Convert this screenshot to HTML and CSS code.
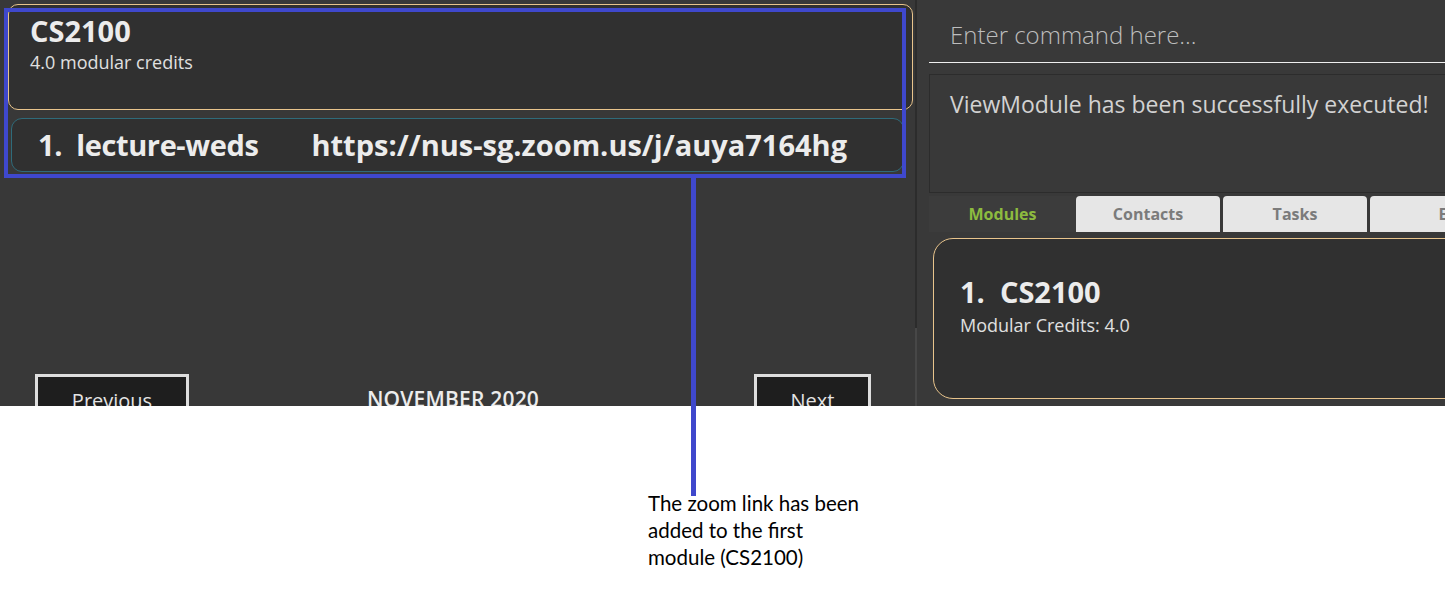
FILE: index.html
```html
<!DOCTYPE html>
<html lang="en">
<head>
<meta charset="utf-8">
<title>Module view</title>
<link rel="stylesheet" href="styles.css">
</head>
<body>
<div class="page">
  <div class="app">
    <section class="left">
      <div class="module-card">
        <div class="module-title">CS2100</div>
        <div class="module-sub">4.0 modular credits</div>
      </div>
      <div class="link-card">
        <span class="link-name">1.&nbsp;&nbsp;lecture-weds</span>
        <span class="link-url">https://nus-sg.zoom.us/j/auya7164hg</span>
      </div>
      <div class="calendar-space"></div>
      <div class="month-nav">
        <div class="nav-btn prev">Previous</div>
        <div class="month">NOVEMBER 2020</div>
        <div class="nav-btn next">Next</div>
      </div>
    </section>
    <div class="divider"></div>
    <section class="right">
      <div class="command">Enter command here...</div>
      <div class="result">ViewModule has been successfully executed!</div>
      <div class="tabs">
        <div class="tab active">Modules</div>
        <div class="tab">Contacts</div>
        <div class="tab">Tasks</div>
        <div class="tab wide">Events</div>
      </div>
      <div class="tab-body">
        <div class="list-card">
          <div class="list-title">1.&nbsp;&nbsp;CS2100</div>
          <div class="list-sub">Modular Credits: 4.0</div>
        </div>
      </div>
    </section>
  </div>
  <div class="note">
    <p>The zoom link has been<br>added to the first<br>module (CS2100)</p>
  </div>
  <div class="callout-box"></div>
  <div class="callout-line"></div>
</div>
</body>
</html>
```
FILE: styles.css
```css
* { box-sizing: border-box; }
html, body { margin: 0; padding: 0; background: #ffffff; }
body { font-family: "Open Sans", "Noto Sans", sans-serif; }

.page { position: relative; width: 1445px; height: 593px; overflow: hidden; }

.app {
  display: flex;
  height: 406px;
  overflow: hidden;
  background: #383838;
}

/* ---------- left column ---------- */
.left {
  width: 915px;
  flex: none;
  display: flex;
  flex-direction: column;
  padding-top: 4px;
  background: #383838;
}
.left > * { flex: none; }
.module-card {
  margin-left: 8px;
  width: 905px;
  height: 106px;
  border: 1px solid #e8c48c;
  border-radius: 10px;
  background: #303030;
  padding: 8px 0 0 21px;
  color: #ececec;
}
.module-title {
  font-size: 29px;
  font-weight: 700;
  line-height: 36px;
}
.module-sub {
  font-size: 18px;
  line-height: 24px;
  margin-top: 1px;
  color: #e0e0e0;
}
.link-card {
  margin: 8px 0 0 11px;
  width: 893px;
  height: 54px;
  border: 1px solid #2f6b7a;
  border-radius: 11px;
  background: #303030;
  padding: 8px 0 0 26px;
  display: flex;
  gap: 53px;
  font-size: 29px;
  font-weight: 700;
  line-height: 36px;
  color: #ececec;
  white-space: nowrap;
}
.link-name { letter-spacing: -0.4px; }
.calendar-space { height: 202px; }
.month-nav {
  display: grid;
  grid-template-columns: 1fr auto 1fr;
  align-items: start;
  padding: 0 44px 0 35px;
}
.nav-btn {
  height: 48px;
  border: 3px solid #dedede;
  background: #1e1e1e;
  color: #e4e4e4;
  font-size: 20px;
  line-height: 28px;
  padding-top: 10px;
  text-align: center;
}
.nav-btn.prev { width: 154px; justify-self: start; }
.nav-btn.next { width: 117px; justify-self: end; }
.month {
  color: #ececec;
  font-size: 21px;
  font-weight: 600;
  line-height: 28px;
  padding-top: 11px;
  letter-spacing: 0.2px;
}

.divider {
  width: 2px;
  flex: none;
  background: linear-gradient(#2c2c2c 0 328px, #474747 328px);
}

/* ---------- right column ---------- */
.right {
  flex: 1;
  min-width: 0;
  overflow: hidden;
  padding-left: 12px;
  background: #393939;
}
.command {
  width: 600px;
  padding: 19px 0 11px 21px;
  border-bottom: 1px solid #efefef;
  color: #bdbdbd;
  font-size: 24px;
  font-weight: 300;
  line-height: 32px;
}
.result {
  margin-top: 11px;
  width: 600px;
  height: 119px;
  border: 1px solid #2c2c2c;
  padding: 13px 0 0 20px;
  color: #d2d2d2;
  font-size: 23px;
  line-height: 32px;
  white-space: nowrap;
}
.tabs {
  margin-top: 3px;
  display: flex;
  gap: 3px;
  height: 36px;
}
.tab {
  width: 144px;
  flex: none;
  background: #e6e6e6;
  border-radius: 4px 4px 0 0;
  color: #7b7b7b;
  font-size: 16px;
  font-weight: 700;
  line-height: 36px;
  text-align: center;
}
.tab.wide { width: 190px; }
.tab.active {
  width: 147px;
  margin-right: -3px;
  background: #3c3c3c;
  color: #8dbb3f;
  border-radius: 0;
}
.tab-body { padding: 6px 0 0 4px; }
.list-card {
  width: 620px;
  height: 161px;
  border: 1.5px solid #e8c48c;
  border-radius: 20px;
  background: #303030;
  padding: 35px 0 0 26px;
  color: #ececec;
}
.list-title {
  font-size: 29px;
  font-weight: 700;
  line-height: 36px;
}
.list-sub {
  margin-top: 3px;
  font-size: 18px;
  line-height: 24px;
  color: #e0e0e0;
}

/* ---------- annotation ---------- */
.note {
  padding: 84px 0 0 648px;
}
.note p {
  margin: 0;
  font-family: "Lato", "Open Sans", sans-serif;
  font-size: 20.5px;
  line-height: 27px;
  color: #000000;
}
.callout-box {
  position: absolute;
  left: 4px;
  top: 8px;
  width: 902px;
  height: 170px;
  border: 4px solid #3f48cc;
}
.callout-line {
  position: absolute;
  left: 691px;
  top: 178px;
  width: 5px;
  height: 318px;
  background: #3f48cc;
}
```
